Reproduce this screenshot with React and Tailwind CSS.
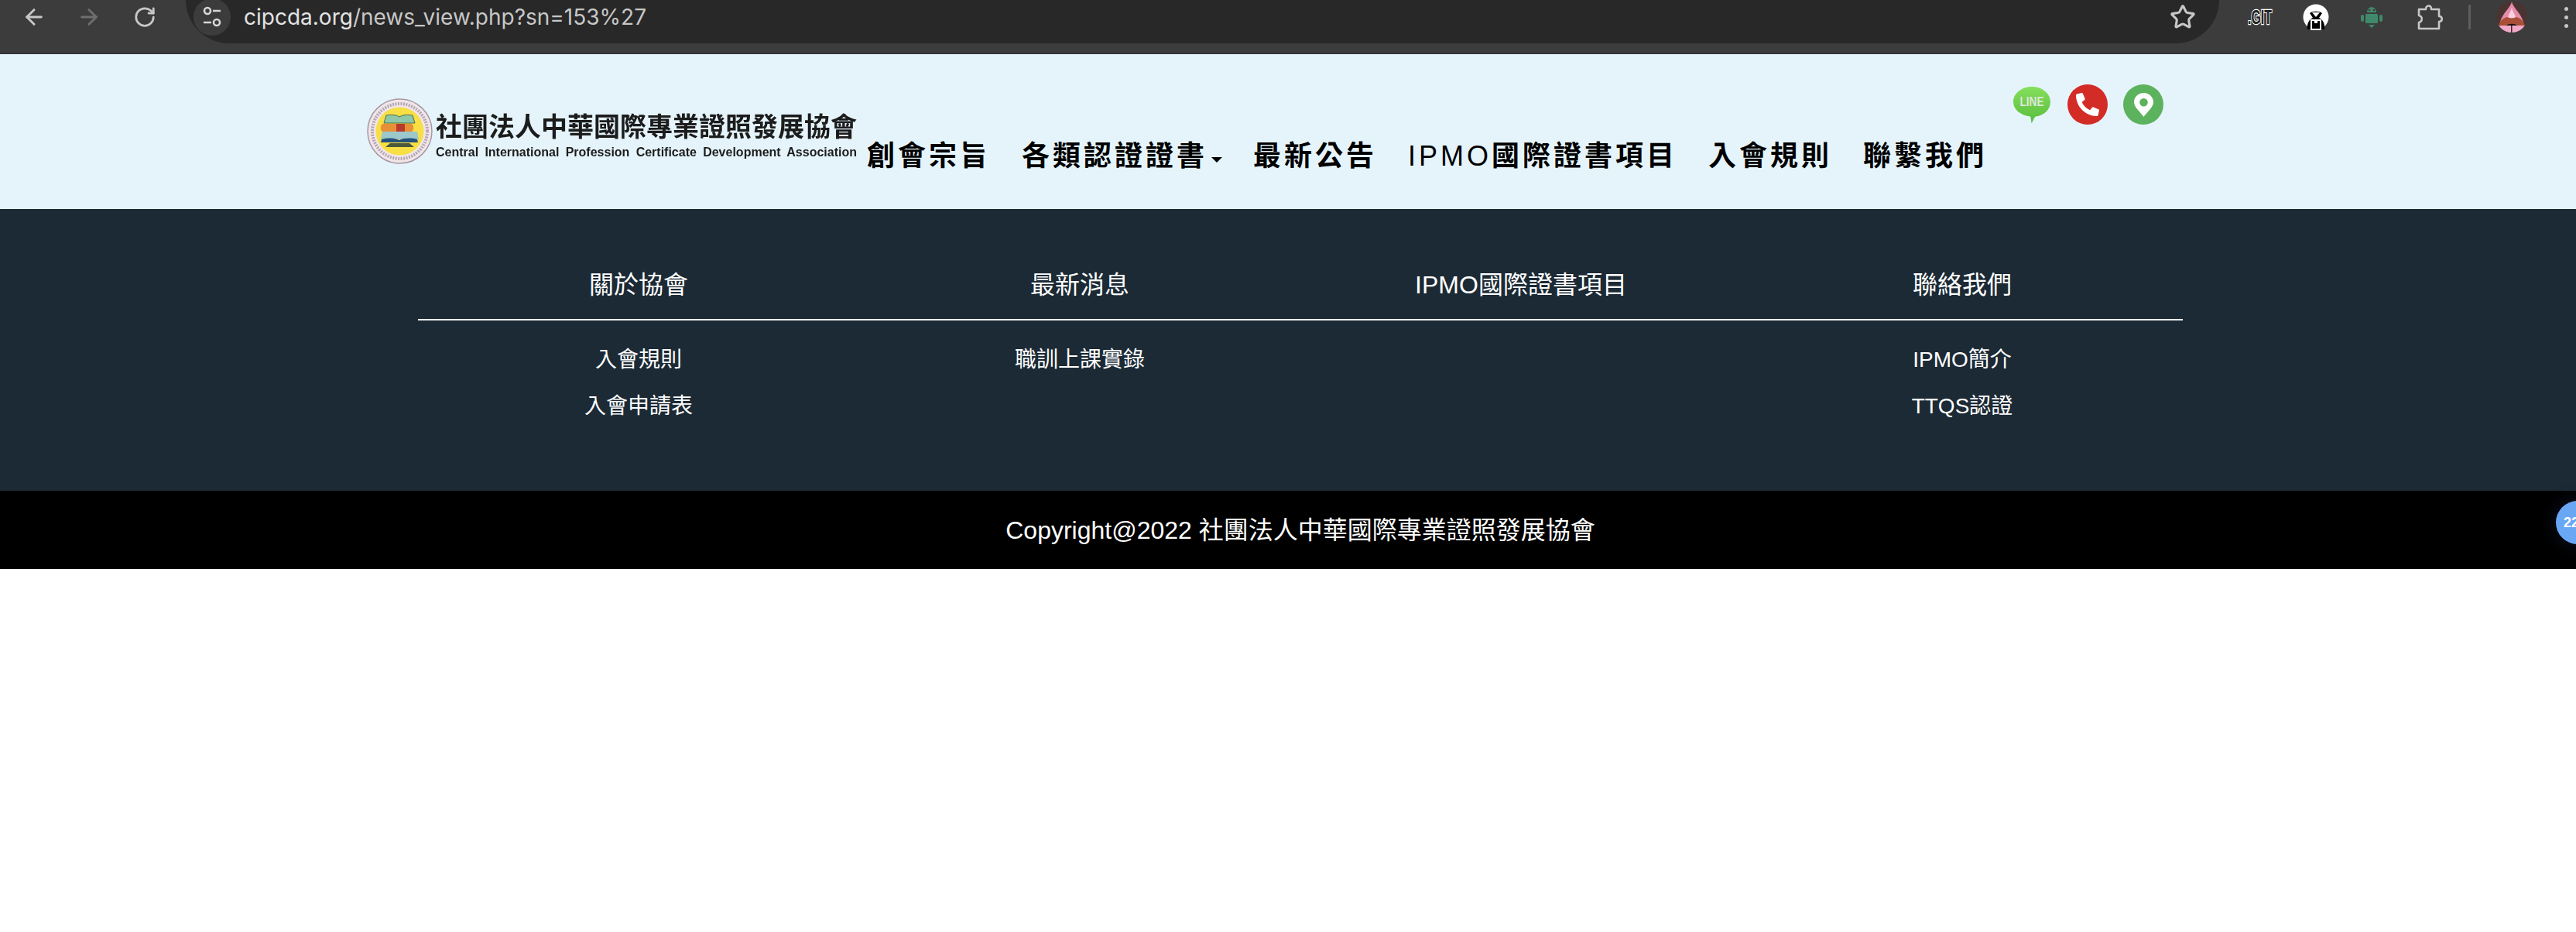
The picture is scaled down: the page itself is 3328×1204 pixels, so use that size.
import React from 'react';
import { ArrowLeft, ArrowRight, RotateCw, Star } from 'lucide-react';
import { FaPhoneAlt } from 'react-icons/fa';

const cjk = { fontFamily: '"Liberation Sans", "Noto Sans CJK TC", sans-serif' };

const navItems = [
  { label: '創會宗旨' },
  { label: '各類認證證書', caret: true },
  { label: '最新公告' },
  { label: '國際證書項目', latin: 'IPMO' },
  { label: '入會規則' },
  { label: '聯繫我們' },
];

const footerColumns = [
  { title: '關於協會', links: ['入會規則', '入會申請表'] },
  { title: '最新消息', links: ['職訓上課實錄'] },
  { title: 'IPMO國際證書項目', links: [] },
  { title: '聯絡我們', links: ['IPMO簡介', 'TTQS認證'] },
];

const TuneIcon = () => (
  <svg width="24" height="30" viewBox="0 0 24 30" fill="none" stroke="#d6d6d6" strokeWidth="2.6">
    <circle cx="6" cy="7" r="4" />
    <path d="M13 7h10M1 22h10" />
    <circle cx="18" cy="22" r="4" />
  </svg>
);

const GitIcon = () => (
  <svg width="34" height="36" viewBox="0 0 34 36">
    <text x="1" y="27" fontFamily="Liberation Sans" fontWeight="700" fontSize="25" fill="#222" stroke="#fff" strokeWidth="2.4" paintOrder="stroke" textLength="31" lengthAdjust="spacingAndGlyphs">.GIT</text>
  </svg>
);

const HoodIcon = () => (
  <svg width="34" height="34" viewBox="0 0 34 34">
    <ellipse cx="17" cy="17" rx="16.5" ry="16.5" fill="#fff" />
    <path d="M6 33c-1-7 2-13 7-15l-4-6c3-3 13-3 16 0l-4 6c5 2 8 8 7 15z" fill="#000" />
    <path d="M12 11h10l-5 6z" fill="#fff" />
    <rect x="11" y="21" width="12" height="12" fill="none" stroke="#fff" strokeWidth="2" />
    <rect x="15" y="21" width="4" height="4" fill="#fff" />
  </svg>
);

const AndroidIcon = () => (
  <svg width="28" height="30" viewBox="0 0 28 30" fill="#3f8a6c">
    <path d="M8 9c0-9 12-9 12 0z" />
    <circle cx="11" cy="6" r="1.3" fill="#3c3c3c" />
    <circle cx="17" cy="6" r="1.3" fill="#3c3c3c" />
    <rect x="6" y="11" width="16" height="12" rx="1.5" />
    <rect x="0" y="12" width="4" height="9" rx="2" />
    <rect x="24" y="12" width="4" height="9" rx="2" />
    <path d="M10 25h8l-4 4z" />
  </svg>
);

const PuzzleIcon = () => (
  <svg width="34" height="34" viewBox="0 0 34 34" fill="none" stroke="#c7c7c7" strokeWidth="2.6" strokeLinejoin="round">
    <path d="M2 7h9c0-6 7-6 7 0h10v9c5 0 5 7 0 7v9H2v-8c5-1 5-8 0-9z" />
  </svg>
);

const AvatarIcon = () => (
  <svg width="40" height="40" viewBox="0 0 40 40" className="rounded-full">
    <rect width="40" height="40" fill="#4a3432" />
    <path d="M20 0c1 7 11 14 15 26H5C9 14 19 7 20 0z" fill="#e88bab" />
    <path d="M20 8c1 5 4 8 5 13H15c1-5 4-8 5-13z" fill="#f8d3df" />
    <path d="M3 31c2-8 8-10 11-11l6 2 6-2c3 1 9 3 11 11z" fill="#a94f35" />
    <rect y="31" width="40" height="9" fill="#f0a9c9" />
    <path d="M13 31c3-3 11-3 14 0z" fill="#1c1414" />
    <rect x="19" y="31" width="1.500" height="9" fill="#3d2b2a" />
  </svg>
);

const LineIcon = () => (
  <svg width="48" height="47" viewBox="0 0 48 47" className="mr-[2px]">
    <defs>
      <linearGradient id="lineGreen" x1="0" y1="0" x2="0" y2="1">
        <stop offset="0" stopColor="#85df5c" />
        <stop offset="1" stopColor="#58bd3c" />
      </linearGradient>
    </defs>
    <path d="M24 0c13 0 24 8.500 24 19.500 0 10-8 17.500-19 19-2 .5-3 6-5.500 8.500-.5-3-.5-6-1.500-8.500C10 37 0 30 0 19.500 0 8.500 11 0 24 0z" fill="url(#lineGreen)" />
    <text x="24" y="25" textAnchor="middle" fontFamily="Liberation Sans" fontSize="17" fontWeight="700" fill="#dfe6da" textLength="31" lengthAdjust="spacingAndGlyphs">LINE</text>
  </svg>
);

const PinIcon = () => (
  <svg width="25" height="31" viewBox="0 0 25 31">
    <path fillRule="evenodd" d="M12.500 0C5.600 0 0 5.300 0 12c0 6.500 8 12.500 12.500 19C17 24.500 25 18.500 25 12 25 5.300 19.400 0 12.500 0zm0 7a5.300 5.300 0 1 1 0 10.600 5.300 5.300 0 0 1 0-10.600z" fill="#fff" />
  </svg>
);

const Emblem = () => (
  <svg width="85" height="85" viewBox="0 0 85 85" className="shrink-0">
    <circle cx="42.500" cy="42.500" r="41.500" fill="#f0e6ea" stroke="#a898a4" strokeWidth="1.500" />
    <circle cx="42.500" cy="42.500" r="35.500" fill="none" stroke="#a596a4" strokeWidth="4" strokeDasharray="2 1.500" opacity="0.8" />
    <circle cx="42.500" cy="42.500" r="31" fill="#f7df45" />
    <path d="M22 32l3-10c6-1 12-1 17 2 5-3 11-3 17-2l3 10z" fill="#8fc8a8" stroke="#4a6a4a" strokeWidth="1" />
    <path d="M20 33h38c3 2 3 8 0 10H20c-3-2-3-8 0-10z" fill="#e89038" />
    <rect x="38" y="33" width="11" height="10" fill="#b83a2c" />
    <path d="M20 43h45l2 10H18z" fill="#9cc8cc" />
    <path d="M19 53c8-2 17-2 23 1 6-3 15-3 23-1l1 4H18z" fill="#24507c" />
    <path d="M24 63l6-5h25l6 5z" fill="#4a5a3a" />
  </svg>
);

const ChromeBar = () => (
  <div className="flex h-[70px] bg-[#3c3c3c] border-b-2 border-[#353535]">
    <div className="relative flex w-full h-[68px]">
      <div className="flex h-[44px] items-center w-[240px] shrink-0 pl-[28px]">
        <ArrowLeft size={32} strokeWidth={2.2} color="#c7c7c7" />
        <ArrowRight size={32} strokeWidth={2.2} color="#6f6f6f" className="ml-[39px]" />
        <RotateCw size={30} strokeWidth={2.2} color="#c7c7c7" className="ml-[41px]" />
      </div>
      <div className="flex items-center h-[56px] w-[2627px] rounded-b-[56px] bg-[#282828] pb-[12px] shrink-0">
        <div className="flex items-center justify-center w-[48px] h-[48px] rounded-full bg-[#3c3c3c] ml-[10px]">
          <TuneIcon />
        </div>
        <span className="ml-[17px] text-[28px] leading-[44px] text-[#e3e3e3]" style={{ fontFamily: 'Inter, sans-serif' }}>
          cipcda.org<span className="text-[#c7c7c7]">/news_view.php?sn=153%27</span>
        </span>
        <Star size={34} strokeWidth={2.2} color="#c7c7c7" className="ml-auto mr-[30px]" />
      </div>
      <div className="flex items-center h-[44px] flex-1">
        <div className="ml-[36px]"><GitIcon /></div>
        <div className="ml-[38px]"><HoodIcon /></div>
        <div className="ml-[41px]"><AndroidIcon /></div>
        <div className="ml-[45px]"><PuzzleIcon /></div>
        <div className="ml-[32px] w-[3px] h-[32px] bg-[#5e5e5e]" />
        <div className="ml-[33px]"><AvatarIcon /></div>
        <div className="ml-[48px] flex flex-col gap-[6px]">
          <span className="w-[5px] h-[5px] rounded-full bg-[#c7c7c7]" />
          <span className="w-[5px] h-[5px] rounded-full bg-[#c7c7c7]" />
          <span className="w-[5px] h-[5px] rounded-full bg-[#c7c7c7]" />
        </div>
      </div>
    </div>
  </div>
);

const Header = () => (
  <header className="h-[200px] bg-[#e5f4fb]">
    <div className="flex w-[2384px] ml-[472px] h-full">
      <div className="flex w-[628px] shrink-0 pt-[57px] pl-[2px] blur-[0.6px]">
        <Emblem />
        <div className="ml-[4px] w-[546px] text-[#1c1c1c]">
          <div className="text-[34px] leading-[44px] font-bold whitespace-nowrap mt-[13px]" style={{ fontFamily: '"Noto Sans CJK TC", sans-serif' }}>社團法人中華國際專業證照發展協會</div>
          <div className="text-[16px] leading-[20px] mt-[3px] font-bold whitespace-nowrap [text-align-last:justify]" style={{ fontFamily: '"Liberation Sans", sans-serif' }}>Central International Profession Certificate Development Association</div>
        </div>
      </div>
      <div className="flex-1 flex flex-col">
        <div className="flex justify-end items-center gap-[20px] pt-[39px] pr-[61px]">
          <LineIcon />
          <div className="flex items-center justify-center w-[52px] h-[52px] rounded-full bg-[#d32c26] text-white">
            <FaPhoneAlt size={30} />
          </div>
          <div className="flex items-center justify-center w-[52px] h-[52px] rounded-full bg-[#5cb25d]">
            <PinIcon />
          </div>
        </div>
        <nav className="flex mt-[16px]" style={cjk}>
          {navItems.map((item) => (
            <a key={item.label} className="flex items-center px-[20px] text-[36px] leading-[50px] font-bold tracking-[4px] text-black whitespace-nowrap">
              {item.latin && <span className="font-normal">{item.latin}</span>}
              {item.label}
              {item.caret && <span className="ml-[5px] mt-[8px] w-0 h-0 border-x-[7px] border-x-transparent border-t-[7px] border-t-black" />}
            </a>
          ))}
        </nav>
      </div>
    </div>
  </header>
);

const Footer = () => (
  <footer className="bg-[#1c2a35] h-[364px] text-white" style={cjk}>
    <div className="w-[2280px] ml-[540px] pt-[68px]">
      <div className="grid grid-cols-4 border-b-2 border-white pb-[14px]">
        {footerColumns.map((col) => (
          <div key={col.title} className="text-center text-[32px] leading-[60px]">{col.title}</div>
        ))}
      </div>
      <div className="grid grid-cols-4 mt-[21px]">
        {footerColumns.map((col) => (
          <ul key={col.title} className="text-center text-[28px] leading-[60px]">
            {col.links.map((link) => <li key={link}>{link}</li>)}
          </ul>
        ))}
      </div>
    </div>
  </footer>
);

export default function App() {
  return (
    <div className="relative w-[3328px] h-[1204px] overflow-hidden bg-white">
      <ChromeBar />
      <Header />
      <Footer />
      <div className="flex items-center justify-center h-[101px] pl-[32px] bg-black text-white text-[32px]" style={cjk}>
        Copyright@2022 社團法人中華國際專業證照發展協會
      </div>
      {/* floating counter, cut off by the window edge */}
      <div className="absolute left-[3302px] top-[647px] flex items-center w-[56px] h-[56px] pl-[10px] rounded-full bg-[#69a7f5] text-white text-[18px] font-bold shadow-[0_0_24px_rgba(60,80,160,0.25)]" style={{ fontFamily: '"Liberation Sans", sans-serif' }}>
        22
      </div>
    </div>
  );
}
